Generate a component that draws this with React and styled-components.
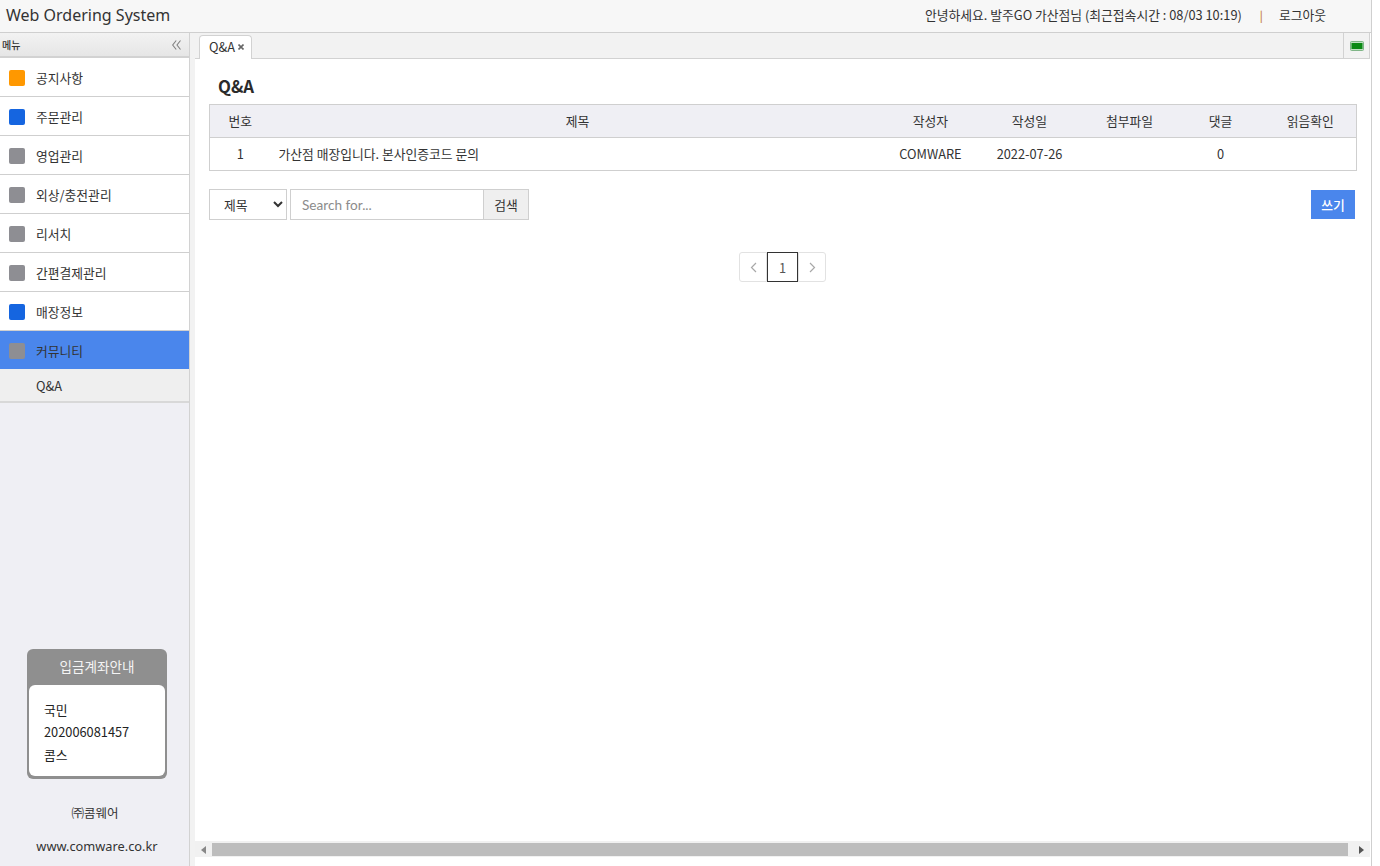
import React from "react";
import styled, { createGlobalStyle } from "styled-components";

const GlobalStyle = createGlobalStyle`
  html, body { margin: 0; padding: 0; height: 100%; background: #fff; overflow: hidden; }
  body {
    font-family: "Noto Sans CJK KR", "Noto Sans", sans-serif;
    font-size: 12.8px;
    color: #333;
  }
  * { box-sizing: border-box; }
`;

const Page = styled.div`
  width: 1380px;
  height: 866px;
  display: flex;
  flex-direction: column;
`;

const Header = styled.header`
  height: 33px;
  width: 1372px;
  flex: none;
  display: flex;
  align-items: center;
  justify-content: space-between;
  background: #f7f7f7;
  border-bottom: 1px solid #cfcfcf;
  border-right: 1px solid #cfcfcf;
  padding: 0 45px 3px 6px;
`;

const Brand = styled.h1`
  margin: 0;
  font-family: "Noto Sans", sans-serif;
  font-size: 16px;
  font-weight: 400;
  color: #333;
`;

const UserBox = styled.div`
  display: flex;
  align-items: center;
  color: #333;
`;

const Divider = styled.span`
  color: #c47a30;
  margin: 0 16px 0 18px;
  font-size: 11px;
  font-weight: 500;
`;

const Body = styled.div`
  flex: 1;
  min-height: 0;
  display: flex;
`;

const Sidebar = styled.aside`
  width: 190px;
  flex: none;
  display: flex;
  flex-direction: column;
  background: #efeff4;
  border-right: 1px solid #d2d2d2;
`;

const MenuHead = styled.div`
  height: 25px;
  flex: none;
  display: flex;
  align-items: center;
  justify-content: space-between;
  padding: 0 8px 0 2px;
  font-size: 10px;
  font-weight: 500;
  background: linear-gradient(#f2f2f2, #e6e6e6);
  border-bottom: 2px solid #d2d2d2;
  color: #333;
`;

const MenuList = styled.ul`
  list-style: none;
  margin: 0;
  padding: 0;
`;

const MenuItem = styled.li`
  height: ${(p) => (p.$active ? "38px" : "39px")};
  display: flex;
  align-items: center;
  gap: 11px;
  padding: 2px 0 0 9px;
  background: ${(p) => (p.$active ? "#4a86ec" : "#fff")};
  border-bottom: ${(p) => (p.$active ? "0" : "1px solid #cfcfcf")};
  color: #333;
`;

const Swatch = styled.span`
  width: 16px;
  height: 16px;
  border-radius: 2px;
  background: ${(p) => p.$color};
`;

const MenuLabel = styled.span`
  padding-bottom: 2px;
`;

const SubItem = styled.div`
  height: 34px;
  display: flex;
  align-items: center;
  padding-left: 36px;
  background: #efefef;
  border-bottom: 2px solid #d8d8d8;
  color: #333;
`;

const Account = styled.section`
  width: 140px;
  margin: auto 0 0 27px;
  background: #8f8f8f;
  border-radius: 6px;
  padding: 0 2px 3px;
`;

const AccountTitle = styled.div`
  height: 36px;
  padding-bottom: 2px;
  display: flex;
  align-items: center;
  justify-content: center;
  color: #f4f4f4;
  font-size: 13.6px;
`;

const AccountBody = styled.div`
  height: 91px;
  background: #fff;
  border-radius: 6px;
  padding: 14px 15px 0;
  line-height: 22.4px;
  color: #222;
`;

const Company = styled.div`
  text-align: center;
  margin-top: 25px;
  height: 18px;
  line-height: 18px;
  padding-left: 1px;
  font-size: 12.5px;
  color: #333;
`;

const Site = styled.div`
  text-align: center;
  margin: 15px 0 11px;
  padding-left: 5px;
  font-family: "Noto Sans", sans-serif;
  font-size: 12.8px;
  height: 18px;
  line-height: 18px;
  color: #333;
`;

const Gutter = styled.div`
  width: 5px;
  flex: none;
  background: #f2f2f2;
`;

const Main = styled.main`
  width: 1177px;
  flex: none;
  display: flex;
  flex-direction: column;
  border-right: 1px solid #cfcfcf;
`;

const TabBar = styled.div`
  height: 26px;
  flex: none;
  display: flex;
  justify-content: space-between;
  align-items: flex-end;
  width: 1175px;
  padding-left: 4px;
  background: #f2f2f2;
  border-bottom: 1px solid #d2d2d2;
`;

const Tab = styled.div`
  width: 53px;
  height: 24px;
  margin-bottom: -1px;
  display: flex;
  align-items: center;
  gap: 3px;
  padding: 0 0 2px 9px;
  background: #fff;
  border: 1px solid #d2d2d2;
  border-bottom: 0;
  border-radius: 4px 4px 0 0;
  color: #333;
`;

const TabTool = styled.div`
  width: 27px;
  height: 26px;
  margin-bottom: -1px;
  display: flex;
  align-items: center;
  justify-content: center;
  border-left: 1px solid #d2d2d2;
  border-bottom: 1px solid #d2d2d2;
  border-right: 1px solid #d2d2d2;
`;

const Content = styled.div`
  flex: 1;
  min-height: 0;
  padding: 0 14px;
`;

const Title = styled.h2`
  margin: 0;
  height: 45px;
  padding: 14.5px 0 0 9px;
  font-size: 16.8px;
  line-height: 25px;
  font-weight: 700;
  color: #2b2b2b;
`;

const Table = styled.table`
  width: 1147px;
  border-collapse: collapse;
  table-layout: fixed;
  border: 1px solid #cfcfcf;
`;

const Th = styled.th`
  height: 33px;
  padding: 0 0 2px;
  font-weight: 400;
  background: #efeff4;
  border-bottom: 1px solid #cfcfcf;
  color: #333;
`;

const Td = styled.td`
  height: 33px;
  padding: 0 0 2px ${(p) => (p.$left ? "8px" : "0")};
  text-align: ${(p) => (p.$left ? "left" : "center")};
  color: #333;
`;

const SearchRow = styled.div`
  display: flex;
  align-items: center;
  margin-top: 18px;
  width: 1146px;
`;

const Select = styled.select`
  width: 78px;
  height: 31px;
  margin-right: 3px;
  padding-left: 10px;
  border: 1px solid #cfcfcf;
  border-radius: 0;
  background: #fff;
  font: inherit;
  color: #333;
`;

const SearchInput = styled.input`
  width: 193px;
  height: 31px;
  padding: 0 11px;
  border: 1px solid #cfcfcf;
  border-right: 0;
  outline: 0;
  font-family: "Lato", "Noto Sans", sans-serif;
  font-size: 13.6px;
  &::placeholder { color: #8c8c8c; opacity: 1; }
`;

const SearchButton = styled.button`
  width: 46px;
  height: 31px;
  padding: 0;
  border: 1px solid #cfcfcf;
  background: #efefef;
  font: inherit;
  color: #333;
`;

const WriteButton = styled.button`
  width: 44px;
  height: 29px;
  margin-left: auto;
  padding: 0;
  border: 0;
  background: #4a86ec;
  font: inherit;
  font-weight: 500;
  color: #fff;
`;

const Pager = styled.nav`
  display: flex;
  justify-content: center;
  margin-top: 32px;
  width: 1147px;
`;

const PageCell = styled.span`
  width: ${(p) => (p.$current ? "31px" : "28px")};
  height: 30px;
  display: flex;
  align-items: center;
  justify-content: center;
  color: ${(p) => (p.$current ? "#555" : "#a8a8a8")};
  border: 1px solid ${(p) => (p.$current ? "#333" : "#e2e2e2")};
  border-radius: ${(p) => p.$radius || "0"};
`;

const ScrollTrack = styled.div`
  height: 16px;
  flex: none;
  margin-bottom: 9px;
  width: 1175px;
  padding: 2px 0 1px;
  display: flex;
  background: #f1f1f1;
`;

const ScrollArrow = styled.span`
  width: ${(p) => (p.$left ? "17px" : "22px")};
  padding-left: ${(p) => (p.$left ? "0" : "4px")};
  flex: none;
  display: flex;
  align-items: center;
  justify-content: center;
  &::before {
    content: "";
    border-style: solid;
    border-width: 4px 0 4px 5px;
    border-color: transparent transparent transparent ${(p) => (p.$left ? "#888" : "#555")};
    transform: ${(p) => (p.$left ? "rotate(180deg)" : "none")};
  }
`;

const ScrollThumb = styled.div`
  flex: 1;
  background: #bdbdbd;
`;

const menus = [
  { label: "공지사항", color: "#ff9800" },
  { label: "주문관리", color: "#1565e0" },
  { label: "영업관리", color: "#8e8e93" },
  { label: "외상/충전관리", color: "#8e8e93" },
  { label: "리서치", color: "#8e8e93" },
  { label: "간편결제관리", color: "#8e8e93" },
  { label: "매장정보", color: "#1565e0" },
  { label: "커뮤니티", color: "#8e8e93", active: true },
];

const columns = [
  { label: "번호", width: 61 },
  { label: "제목", width: 614 },
  { label: "작성자", width: 92 },
  { label: "작성일", width: 106 },
  { label: "첨부파일", width: 94 },
  { label: "댓글", width: 88 },
  { label: "읽음확인", width: 92 },
];

const Chevrons = () => (
  <svg width="9" height="10" viewBox="0 0 9 10" fill="none" stroke="#808080" strokeWidth="1.1">
    <path d="M4.2 0.5 L0.7 5 L4.2 9.5 M8.5 0.5 L5 5 L8.5 9.5" />
  </svg>
);

const Chevron = ({ dir }) => (
  <svg width="7" height="11" viewBox="0 0 7 11" fill="none" stroke="#a8a8a8" strokeWidth="1.2">
    <path d={dir === "left" ? "M6 1 L1.5 5.5 L6 10" : "M1 1 L5.5 5.5 L1 10"} />
  </svg>
);

const CloseIcon = () => (
  <svg width="6" height="6" viewBox="0 0 6 6" stroke="#666" strokeWidth="1.6">
    <path d="M0.5 0.5 L5.5 5.5 M5.5 0.5 L0.5 5.5" />
  </svg>
);

const BatteryIcon = () => (
  <svg width="14" height="10" viewBox="0 0 14 10">
    <rect x="0.5" y="0.5" width="13" height="9" rx="1" fill="#bfe0c2" stroke="#7fb587" />
    <rect x="1.5" y="2" width="11" height="6" fill="#0a8a14" />
  </svg>
);

export default function App() {
  return (
    <Page>
      <GlobalStyle />
      <Header>
        <Brand>Web Ordering System</Brand>
        <UserBox>
          <span>안녕하세요. 발주GO 가산점님 (최근접속시간 : 08/03 10:19)</span>
          <Divider>|</Divider>
          <span>로그아웃</span>
        </UserBox>
      </Header>
      <Body>
        <Sidebar>
          <MenuHead>
            <span>메뉴</span>
            <Chevrons />
          </MenuHead>
          <MenuList>
            {menus.map((m) => (
              <MenuItem key={m.label} $active={m.active}>
                <Swatch $color={m.color} />
                <MenuLabel>{m.label}</MenuLabel>
              </MenuItem>
            ))}
          </MenuList>
          <SubItem>Q&amp;A</SubItem>
          <Account>
            <AccountTitle>입금계좌안내</AccountTitle>
            <AccountBody>
              국민
              <br />
              202006081457
              <br />
              콤스
            </AccountBody>
          </Account>
          <Company>㈜콤웨어</Company>
          <Site>www.comware.co.kr</Site>
        </Sidebar>
        <Gutter />
        <Main>
          <TabBar>
            <Tab>
              Q&amp;A <CloseIcon />
            </Tab>
            <TabTool>
              <BatteryIcon />
            </TabTool>
          </TabBar>
          <Content>
            <Title>Q&amp;A</Title>
            <Table>
              <colgroup>
                {columns.map((c) => (
                  <col key={c.label} width={c.width} />
                ))}
              </colgroup>
              <thead>
                <tr>
                  {columns.map((c) => (
                    <Th key={c.label}>{c.label}</Th>
                  ))}
                </tr>
              </thead>
              <tbody>
                <tr>
                  <Td>1</Td>
                  <Td $left>가산점 매장입니다. 본사인증코드 문의</Td>
                  <Td>COMWARE</Td>
                  <Td>2022-07-26</Td>
                  <Td />
                  <Td>0</Td>
                  <Td />
                </tr>
              </tbody>
            </Table>
            <SearchRow>
              <Select defaultValue="title">
                <option value="title">제목</option>
              </Select>
              <SearchInput placeholder="Search for..." />
              <SearchButton>검색</SearchButton>
              <WriteButton>쓰기</WriteButton>
            </SearchRow>
            <Pager>
              <PageCell $radius="3px 0 0 3px">
                <Chevron dir="left" />
              </PageCell>
              <PageCell $current>1</PageCell>
              <PageCell $radius="0 3px 3px 0">
                <Chevron dir="right" />
              </PageCell>
            </Pager>
          </Content>
          <ScrollTrack>
            <ScrollArrow $left />
            <ScrollThumb />
            <ScrollArrow />
          </ScrollTrack>
        </Main>
      </Body>
    </Page>
  );
}
